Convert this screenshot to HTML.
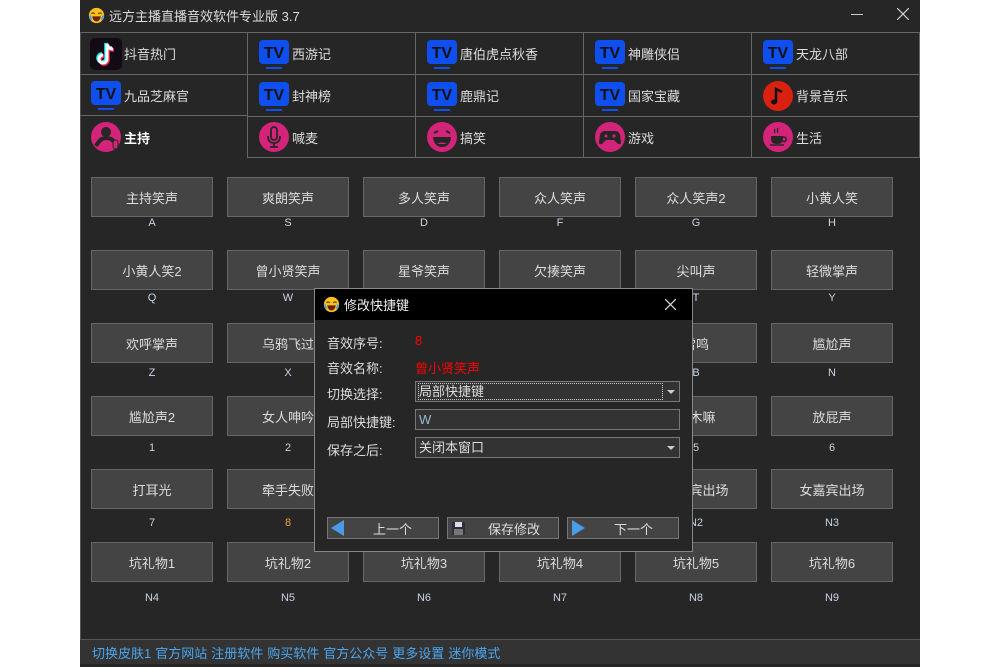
<!DOCTYPE html>
<html><head><meta charset="utf-8"><style>
*{margin:0;padding:0;box-sizing:border-box}
body{width:1000px;height:667px;background:#fff;position:relative;overflow:hidden;font-family:"Liberation Sans","Noto Sans CJK SC",sans-serif;font-size:13px;color:#ddd}
.win{position:absolute;left:80px;top:0;width:840px;height:667px;background:#262626}
.title{position:absolute;left:8px;top:6px;font-size:13px;color:#ddd;display:flex;align-items:center;gap:4px}
.tab{position:absolute;border-right:1px solid #666;border-bottom:1px solid #666;display:flex;align-items:center;padding-left:10px;gap:2px;font-size:13px;color:#ddd}
.tab svg{flex:none}
.btn{position:absolute;width:122px;height:40px;background:#444;border:1px solid #666;color:#ddd;font-size:13px;display:flex;align-items:center;justify-content:center}
.key{position:absolute;width:122px;text-align:center;font-size:11px;line-height:13px;color:#c8d4e4}
.dlg{position:absolute;left:314px;top:288px;width:379px;height:264px;background:#262626;border:1px solid #888}
.dt{position:absolute;left:0;top:0;width:377px;height:31px;background:#000;display:flex;align-items:center;padding-left:8px;gap:4px;font-size:13px;color:#eee}
.lab{position:absolute;left:12px;font-size:13px;color:#ddd}
.val{position:absolute;left:100px;color:#f00;font-size:13px}
.cb{position:absolute;left:100px;width:265px;height:21px;background:#333;border:1px solid #777;font-size:13px;color:#ddd;padding-left:3px;line-height:19px}
.arr{position:absolute;right:4px;top:8px;width:0;height:0;border-left:4px solid transparent;border-right:4px solid transparent;border-top:4px solid #ccc}
.db{position:absolute;top:228px;width:112px;height:22px;background:#444;border:1px solid #777;font-size:13px;color:#ddd;display:flex;align-items:center}
.foot{position:absolute;left:0;top:639px;width:840px;height:25px;background:#333;border-top:1px solid #555;color:#4da6ee;font-size:13px;display:flex;align-items:center;padding-left:12px;gap:4px}
</style></head><body>
<div class="win">
<div class="title"><svg width="17" height="17" viewBox="0 0 20 20"><circle cx="10" cy="10" r="9" fill="#f8c21c"/><path d="M4 8q2-2 4 0M12 8q2-2 4 0" stroke="#6b3b00" stroke-width="1.4" fill="none"/><path d="M5 11h10q-1 6-5 6t-5-6z" fill="#6b1f10"/><path d="M2 10l2 5M18 10l-2 5" stroke="#3aa0ff" stroke-width="2"/></svg>远方主播直播音效软件专业版 3.7</div>
<div style="position:absolute;left:771px;top:14px;width:12px;height:1px;background:#ccc"></div>
<svg style="position:absolute;left:817px;top:8px" width="12" height="12" viewBox="0 0 12 12"><path d="M0 0L12 12M12 0L0 12" stroke="#ccc" stroke-width="1.2"/></svg>
<div style="position:absolute;left:0;top:32px;width:840px;height:1px;background:#666"></div>
<div style="position:absolute;left:0;top:32px;width:1px;height:607px;background:#555"></div>
<div id="tabs"></div>
<div id="grid"></div>
<div class="foot"><span>切换皮肤1</span><span>官方网站</span><span>注册软件</span><span>购买软件</span><span>官方公众号</span><span>更多设置</span><span>迷你模式</span></div>
</div>
<div class="dlg">
<div class="dt"><svg width="17" height="17" viewBox="0 0 20 20"><circle cx="10" cy="10" r="9" fill="#f8c21c"/><path d="M4 8q2-2 4 0M12 8q2-2 4 0" stroke="#6b3b00" stroke-width="1.4" fill="none"/><path d="M5 11h10q-1 6-5 6t-5-6z" fill="#6b1f10"/><path d="M2 10l2 5M18 10l-2 5" stroke="#3aa0ff" stroke-width="2"/></svg>修改快捷键
<svg style="position:absolute;left:350px;top:10px" width="11" height="11" viewBox="0 0 11 11"><path d="M0 0L11 11M11 0L0 11" stroke="#ddd" stroke-width="1.2"/></svg></div>
<div class="lab" style="top:44px">音效序号:</div><div class="val" style="top:44px">8</div>
<div class="lab" style="top:69px">音效名称:</div><div class="val" style="top:69px">曾小贤笑声</div>
<div class="lab" style="top:95px">切换选择:</div><div class="cb" style="top:92px"><span style="outline:1px dotted #ccc;display:inline-block;width:243px;line-height:15px">局部快捷键</span><div class="arr"></div></div>
<div class="lab" style="top:123px">局部快捷键:</div><div class="cb" style="top:120px;color:#9bc">W</div>
<div class="lab" style="top:151px">保存之后:</div><div class="cb" style="top:148px">关闭本窗口<div class="arr"></div></div>
<div class="db" style="left:12px"><svg style="margin-left:3px" width="14" height="16" viewBox="0 0 14 16"><path d="M13 0L0 8L13 16z" fill="#4a9be8"/></svg><span style="margin-left:28px">上一个</span></div>
<div class="db" style="left:132px"><svg style="margin-left:4px" width="13" height="13" viewBox="0 0 13 13"><rect width="13" height="13" fill="#2a2f45"/><rect x="3" y="0" width="7" height="5" fill="#ddd"/><rect x="2" y="7" width="9" height="6" fill="#777"/></svg><span style="margin-left:23px">保存修改</span></div>
<div class="db" style="left:252px"><svg style="margin-left:4px" width="14" height="16" viewBox="0 0 14 16"><path d="M0 0L13 8L0 16z" fill="#4a9be8"/></svg><span style="margin-left:28px">下一个</span></div>
</div>
<script>
const tv='<svg width="32" height="32" viewBox="0 0 32 32"><rect x="1" y="2" width="30" height="24" rx="4" fill="#0f4ff0"/><text x="16" y="20" font-family="Liberation Sans" font-weight="bold" font-size="16" text-anchor="middle" fill="#111">TV</text><rect x="8" y="29" width="16" height="2" fill="#0f4ff0"/></svg>';
const circ=(c,inner)=>'<svg width="32" height="32" viewBox="0 0 32 32"><circle cx="16" cy="16" r="15" fill="'+c+'"/>'+inner+'</svg>';
const ic={
tt:'<svg width="32" height="32" viewBox="0 0 32 32"><rect width="32" height="32" rx="5" fill="#120a14"/><path d="M17 6v15a4 4 0 1 1-4-4M17 6q1 5 6 5" stroke="#25f4ee" stroke-width="3.5" fill="none" transform="translate(-1,-1)"/><path d="M17 6v15a4 4 0 1 1-4-4M17 6q1 5 6 5" stroke="#fe2c55" stroke-width="3.5" fill="none" transform="translate(1,1)"/><path d="M17 6v15a4 4 0 1 1-4-4M17 6q1 5 6 5" stroke="#fff" stroke-width="3" fill="none"/></svg>',
tv:tv,
mus:circ('#d9210f','<path d="M14 22V9l6 3" stroke="#111" stroke-width="2.5" fill="none"/><ellipse cx="12" cy="22" rx="3" ry="2.5" fill="#111"/>'),
host:circ('#d3247a','<circle cx="16" cy="11" r="5" fill="#262626"/><path d="M6 25q4-8 10-8t8 4" stroke="#262626" stroke-width="4" fill="none"/><rect x="23" y="19" width="5" height="9" rx="2.5" fill="#d3247a" stroke="#262626"/>'),
mic:circ('#d3247a','<rect x="13" y="6" width="6" height="13" rx="3" fill="none" stroke="#262626" stroke-width="1.8"/><path d="M10 15q0 7 6 7t6-7M16 22v4M12 26h8" stroke="#262626" stroke-width="1.8" fill="none"/>'),
fun:circ('#d3247a','<path d="M8 12l4-2M24 12l-4-2" stroke="#262626" stroke-width="2"/><path d="M7 16h18q-1 10-9 10t-9-10z" fill="#262626"/><path d="M11 23q5-3 10 0" fill="#d3247a"/>'),
game:circ('#d3247a','<path d="M6 14q1-4 5-4h10q4 0 5 4l1 7q0 3-3 2l-4-4h-8l-4 4q-3 1-3-2z" fill="#262626"/><circle cx="12" cy="15" r="1.5" fill="#d3247a"/><path d="M20 13v4M18 15h4" stroke="#d3247a" stroke-width="1.2"/>'),
life:circ('#d3247a','<path d="M9 15h12v3q0 5-6 5t-6-5z" fill="#262626"/><path d="M21 16q4 0 3 3t-3 1" stroke="#262626" stroke-width="1.5" fill="none"/><path d="M8 24h14" stroke="#262626" stroke-width="1.5"/><path d="M13 8q-1 2 0 4M16 7q-1 3 0 5" stroke="#262626" stroke-width="1.2" fill="none"/>')};
const tabs=[['tt','抖音热门'],['tv','西游记'],['tv','唐伯虎点秋香'],['tv','神雕侠侣'],['tv','天龙八部'],
['tv','九品芝麻官'],['tv','封神榜'],['tv','鹿鼎记'],['tv','国家宝藏'],['mus','背景音乐'],
['host','主持'],['mic','喊麦'],['fun','搞笑'],['game','游戏'],['life','生活']];
let h='';const xs=[0,168,336,504,672,840];
tabs.forEach((t,i)=>{const r=Math.floor(i/5),c=i%5;let top=33+r*42,hh=42;
 if(r==2)hh=41;
 if(c==0&&r==1){hh=41}if(c==0&&r==2){top=116;hh=42}
 let st='left:'+xs[c]+'px;top:'+top+'px;width:'+(xs[c+1]-xs[c])+'px;height:'+hh+'px;';
 if(c==0&&r==2)st+='border-bottom:none;';
 h+='<div class="tab" style="'+st+'">'+ic[t[0]]+'<span'+(t[1]=='主持'?' style="font-weight:bold;color:#fff;font-size:13px"':'')+'>'+t[1]+'</span></div>';});
document.getElementById('tabs').innerHTML=h;
const names=['主持笑声','爽朗笑声','多人笑声','众人笑声','众人笑声2','小黄人笑','小黄人笑2','曾小贤笑声','星爷笑声','欠揍笑声','尖叫声','轻微掌声','欢呼掌声','乌鸦飞过','机枪扫射','子弹扫射','雷鸣','尴尬声','尴尬声2','女人呻吟','木鱼','敲木嘛','敲木嘛','放屁声','打耳光','牵手失败','嘉宾出场','嘉宾出场','男嘉宾出场','女嘉宾出场','坑礼物1','坑礼物2','坑礼物3','坑礼物4','坑礼物5','坑礼物6'];
const keys=['A','S','D','F','G','H','Q','W','E','R','T','Y','Z','X','C','V','B','N','1','2','3','4','5','6','7','8','9','0','N2','N3','N4','N5','N6','N7','N8','N9'];
let g='';names.forEach((n,i)=>{const r=Math.floor(i/6),c=i%6;const x=11+c*136,y=177+r*73;
 g+='<div class="btn" style="left:'+x+'px;top:'+y+'px">'+n+'</div><div class="key" style="left:'+x+'px;top:'+(217+r*75)+'px'+(i==25?';color:#f0a040':'')+'">'+keys[i]+'</div>';});
document.getElementById('grid').innerHTML=g;
</script>
</body></html>
